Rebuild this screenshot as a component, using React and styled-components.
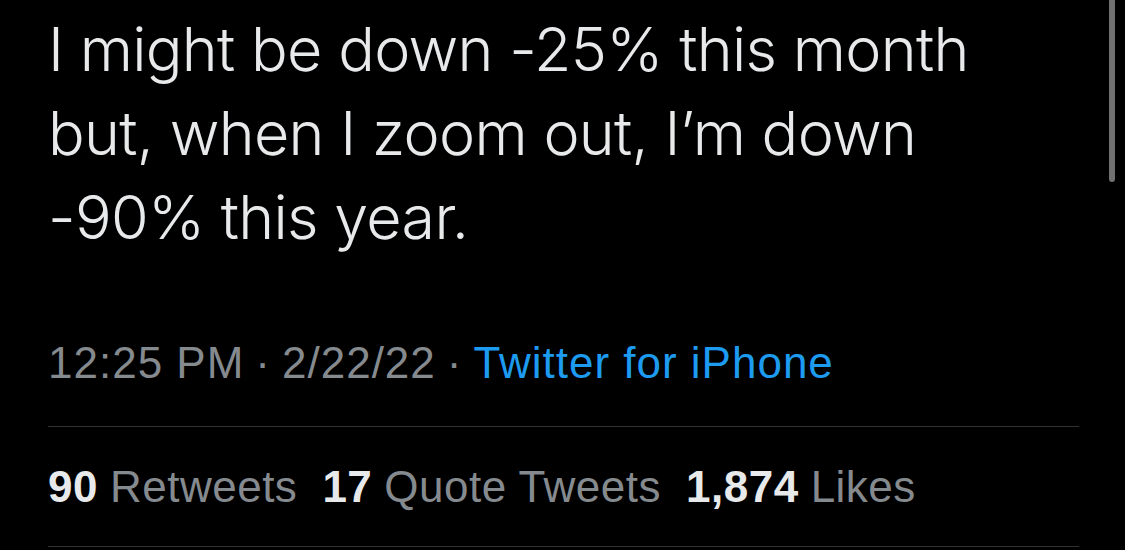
import React from "react";
import styled, { createGlobalStyle } from "styled-components";

const Global = createGlobalStyle`
  html, body { margin: 0; padding: 0; background: #000; }
  body { font-family: "Inter", "Roboto", sans-serif; -webkit-font-smoothing: antialiased; }
`;

const Page = styled.div`
  position: relative;
  width: 1125px;
  height: 550px;
  overflow: hidden;
  background: #000;
  padding: 0 46px 0 48px;
  box-sizing: border-box;
  display: flex;
  flex-direction: column;
`;

const Body = styled.p`
  margin: 7px 0 0;
  font-family: "Inter", sans-serif;
  font-size: 61px;
  line-height: 84px;
  font-weight: 300;
  color: #e7e9ea;
  letter-spacing: -0.7px;
`;

const Meta = styled.div`
  margin-top: 82px;
  font-family: "Liberation Sans", Arial, sans-serif;
  font-size: 44px;
  line-height: 44px;
  letter-spacing: 1px;
  color: #858a8f;
  display: flex;
  gap: 11px;
`;

const Link = styled.span`
  color: #1d9bf0;
`;

const Divider = styled.div`
  height: 1px;
  background: #2f3336;
  margin-top: ${(p) => p.$top}px;
`;

const Stats = styled.div`
  margin-top: 38px;
  display: flex;
  gap: 25px;
  font-family: "Liberation Sans", Arial, sans-serif;
  font-size: 44px;
  line-height: 44px;
  letter-spacing: 0.5px;
  color: #858a8f;
`;

const Stat = styled.span`
  b {
    font-weight: 700;
    color: #e7e9ea;
    margin-right: 12px;
  }
`;

const Scrollbar = styled.div`
  position: absolute;
  top: -6px;
  right: 10px;
  width: 6px;
  height: 188px;
  border-radius: 3px;
  background: #707070;
`;

export default function App() {
  return (
    <>
      <Global />
      <Page>
        <Body>
          I might be down -25% this month
          <br />
          but, when I zoom out, I’m down
          <br />
          -90% this year.
        </Body>
        <Meta>
          <span>12:25 PM</span>
          <span>·</span>
          <span>2/22/22</span>
          <span>·</span>
          <Link>Twitter for iPhone</Link>
        </Meta>
        <Divider $top={41} />
        <Stats>
          <Stat><b>90</b>Retweets</Stat>
          <Stat><b>17</b>Quote Tweets</Stat>
          <Stat><b>1,874</b>Likes</Stat>
        </Stats>
        <Divider $top={37} />
        <Scrollbar />
      </Page>
    </>
  );
}
